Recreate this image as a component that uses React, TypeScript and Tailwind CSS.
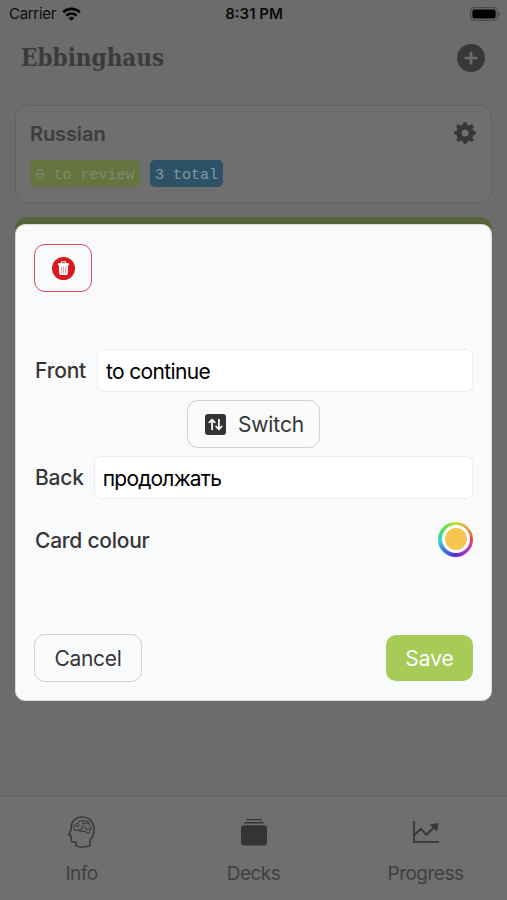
import React from 'react';

function WifiIcon() {
  return (
    <svg width="19" height="14" viewBox="0 0 19 14" fill="none" stroke="#050505" strokeWidth="2.6">
      <path d="M1.2 5.2C5.8 .7 13.2 .7 17.8 5.2" />
      <path d="M4.3 8.6C7.2 5.8 11.8 5.8 14.7 8.6" />
      <path d="M6.6 10.9C8.2 9.4 10.8 9.4 12.4 10.9L9.5 13.8Z" fill="#050505" stroke="none" />
    </svg>
  );
}

function BatteryIcon() {
  return (
    <svg width="31" height="14" viewBox="0 0 31 14">
      <rect x=".6" y=".6" width="26.8" height="12.8" rx="3.8" fill="none" stroke="#484848" strokeWidth="1.2" />
      <rect x="2.4" y="2.4" width="23.2" height="9.2" rx="2" fill="#020202" />
      <path d="M28.6 4.8C30.8 5.4 30.8 8.6 28.6 9.2Z" fill="#484848" />
    </svg>
  );
}

function PlusIcon() {
  return (
    <svg width="28" height="28" viewBox="0 0 28 28">
      <circle cx="14" cy="14" r="14" fill="#383838" />
      <path d="M14 8.8V19.2M8.8 14H19.2" stroke="#6c6c6c" strokeWidth="2.7" strokeLinecap="round" />
    </svg>
  );
}

function GearIcon() {
  return (
    <svg width="22" height="22" viewBox="0 0 22 22" fill="none" stroke="#373737">
      <circle cx="11" cy="11" r="6.1" strokeWidth="5.2" />
      <path
        d="M11 1.9V5M11 17V20.1M1.9 11H5M17 11H20.1M4.4 4.4L6.2 6.2M15.8 15.8L17.6 17.6M4.4 17.6L6.2 15.8M15.8 6.2L17.6 4.4"
        strokeWidth="3.9"
        strokeLinecap="round"
      />
    </svg>
  );
}

function TrashIcon() {
  return (
    <svg width="23" height="23" viewBox="0 0 23 23">
      <circle cx="11.5" cy="11.5" r="11.5" fill="#d9191c" />
      <path d="M9.3 6.2V5.7Q9.3 4.8 10.2 4.8H12.8Q13.7 4.8 13.7 5.7V6.2" fill="none" stroke="#fff" strokeWidth="1.1" />
      <path d="M5.9 6.1H17.1V8.1H5.9Z" fill="#fff" />
      <path d="M6.8 8.1H16.2L15.7 17Q15.6 18.1 14.5 18.1H8.5Q7.4 18.1 7.3 17Z" fill="#fff" />
      <path d="M9.3 9.5L9.6 16.4M11.5 9.5V16.4M13.7 9.5L13.4 16.4" stroke="#e46a6c" strokeWidth=".7" />
    </svg>
  );
}

function SwitchIcon() {
  return (
    <svg width="21" height="21" viewBox="0 0 21 21">
      <rect width="21" height="21" rx="3" fill="#323335" />
      <g fill="none" stroke="#fafbfc" strokeWidth="1.8" strokeLinecap="round" strokeLinejoin="round">
        <path d="M7.1 15.3V5.8M4.4 8.4L7.1 5.6L9.8 8.4" />
        <path d="M13.9 5.6V15M11.2 12.5L13.9 15.3L16.6 12.5" />
      </g>
    </svg>
  );
}

function HeadIcon() {
  return (
    <svg width="27" height="32" viewBox="0 0 27 32" fill="none" stroke="#3d3d3d" strokeLinecap="round" strokeLinejoin="round">
      <path
        strokeWidth="1.7"
        d="M8 29.6C11 31.5 17.5 31.4 22 29.8V23.8C24.6 21.2 26 17.5 26 13.4C26 6 21.2 1 14.3 1C7.7 1 3.2 5.1 3.2 11.2V13.6L1 18C.7 18.8 1.2 19.3 3 19.5V22.2L3.4 24.2C3.4 26 4.4 26.6 8 26V29.6"
      />
      <path
        strokeWidth="1.2"
        d="M6.2 13.4C5.5 10.4 7.2 7.9 9.5 7.2C10.6 4.8 14 4.1 15.8 5.2C18.8 4.2 21.4 6.4 21.4 8.9C23.4 10.8 23.2 13.3 22 14.8C22 16.4 20.8 17.2 19.8 17L16.6 15.2C13.5 15.6 11.4 14.9 9.8 14.1C8.3 14.8 6.9 14.4 6.2 13.4ZM8.4 10.4C10 10.5 11 9.5 11.1 8M12 13.5C14.3 13 15.7 11.2 14.7 9.3M14.6 6.4C16 8.2 18.4 8.1 19.4 6.7M17.2 11.2C17.4 13.4 19.8 14.1 21 12.5"
      />
    </svg>
  );
}

function DecksIcon() {
  return (
    <svg width="26" height="27" viewBox="0 0 26 27" fill="#343434">
      <path d="M5.8 0H20.2L21.2 1.3H4.8Z" />
      <path d="M4.2 3H21.8L23 4.5H3Z" />
      <path d="M3.2 6.2H22.8Q26 6.2 26 9V23.6Q26 26.4 23.1 26.4H2.9Q0 26.4 0 23.6V9Q0 6.2 3.2 6.2Z" />
    </svg>
  );
}

function ProgressIcon() {
  return (
    <svg width="26" height="22" viewBox="0 0 26 22" fill="none" stroke="#383838" strokeWidth="1.8">
      <path d="M1 0V20.9H26" />
      <path d="M1 14.2L7.8 7.9L13.5 13.8L21.8 5.5" strokeWidth="2" />
      <path d="M16.8 3.4L25.6 2L23.9 10.4Z" fill="#383838" stroke="none" />
    </svg>
  );
}

const tabs = [
  { label: 'Info', icon: <HeadIcon /> },
  { label: 'Decks', icon: <DecksIcon /> },
  { label: 'Progress', icon: <ProgressIcon /> },
];

export default function App() {
  return (
    <div className="relative flex h-[900px] w-full flex-col overflow-hidden bg-[#6c6c6c] font-['Inter',sans-serif] text-[#343434]">
      {/* Status bar */}
      <div className="grid h-7 shrink-0 grid-cols-3 items-center pr-[6px] pl-[9px] text-[15px] text-[#0b0b0b]">
        <div className="flex items-center gap-[6px]">
          <span className="tracking-[-0.3px]">Carrier</span>
          <WifiIcon />
        </div>
        <span className="pr-[2px] text-center font-semibold whitespace-nowrap">8:31 PM</span>
        <div className="flex justify-end">
          <BatteryIcon />
        </div>
      </div>

      {/* Header */}
      <header className="flex h-[60px] shrink-0 items-center justify-between pr-[22px] pl-[21px]">
        <h1 className="font-['DejaVu_Serif_Condensed','DejaVu_Serif',serif] text-[24px] font-bold text-[#3b3b3b]">
          Ebbinghaus
        </h1>
        <PlusIcon />
      </header>

      {/* Decks */}
      <main className="flex flex-1 flex-col gap-[14px] px-[15px] pt-[17px]">
        <section className="h-[98px] shrink-0 rounded-xl border border-[#626262] bg-[#6f6f6f] px-[14px] pt-[12px]">
          <div className="flex h-[30px] items-center justify-between pr-[1px]">
            <h2 className="pt-[1px] text-[20px] font-semibold tracking-[-0.1px] text-[#3d3d3d]">Russian</h2>
            <GearIcon />
          </div>
          <div className="mt-3 flex gap-[10px] font-['Liberation_Mono',monospace] text-[15px]">
            <span className="flex h-[27px] w-[110px] items-center justify-center rounded-[5px] bg-[#66743f] pt-[4px] leading-none whitespace-nowrap text-[#808971]">
              0 to review
            </span>
            <span className="flex h-[27px] w-[73px] items-center justify-center rounded-[5px] bg-[#2d5267] pt-[4px] leading-none whitespace-nowrap text-[#8799a3]">
              3 total
            </span>
          </div>
        </section>
        <section className="h-[60px] rounded-xl bg-[#56623a]" />
      </main>

      {/* Tab bar */}
      <nav className="flex h-[105px] shrink-0 justify-center border-t-2 border-[#646464] bg-[#6f6f6f]">
        {tabs.map((tab) => (
          <div key={tab.label} className="flex w-[172px] shrink-0 flex-col items-center pt-[17px]">
            <div className="flex h-9 items-center">{tab.icon}</div>
            <span className="mt-[10px] text-[19px] leading-[28px] tracking-[-0.5px] text-[#404040]">{tab.label}</span>
          </div>
        ))}
      </nav>

      {/* Edit card dialog */}
      <div className="absolute inset-x-[15px] top-[224px] flex h-[477px] flex-col rounded-[10px] border border-[#d7d8da] bg-[#f9fafc] px-[18px] pt-[19px] pb-[18px] text-[21px]">
        <button className="flex h-[48px] w-[58px] items-center justify-center rounded-[11px] border-[1.5px] border-[#e04e50]">
          <TrashIcon />
        </button>

        <label className="mt-[57px] flex h-[43px] items-center gap-[11px] pl-[1px] font-medium tracking-[-0.2px] text-[#363636]">
          <span className="pt-[1px]">Front</span>
          <span className="flex h-full flex-1 items-center rounded-[7px] border border-[#ededef] bg-white pt-[2px] pl-[8px] font-normal tracking-[-0.65px] text-black">
            to continue
          </span>
        </label>

        <button className="mt-[8px] flex h-[48px] w-[133px] shrink-0 items-center justify-center gap-[12px] self-center rounded-[11px] border border-[#cfd0d2] pl-[2px] tracking-[-0.1px] text-[#363636]">
          <SwitchIcon />
          <span className="pt-[1px]">Switch</span>
        </button>

        <label className="mt-[8px] flex h-[43px] items-center gap-[10px] pl-[1px] font-medium tracking-[-0.2px] text-[#363636]">
          <span className="pt-[1px]">Back</span>
          <span className="flex h-full flex-1 items-center rounded-[7px] border border-[#ededef] bg-white pt-[2px] pl-[8px] font-normal tracking-[-0.8px] text-black">
            продолжать
          </span>
        </label>

        <div className="mt-[22px] flex h-[36px] items-center justify-between pl-[1px] font-medium tracking-[-0.25px] text-[#363636]">
          <span className="pt-[3px]">Card colour</span>
          <div className="flex size-[35px] items-center justify-center rounded-full bg-[conic-gradient(#c9e03a,#ee9d3a_50deg,#e54b42_85deg,#c43cbb_125deg,#5c2dcc_180deg,#3b78e0_225deg,#35d0dc_265deg,#3edc7c_295deg,#84e03c_330deg,#c9e03a)]">
            <div className="size-[28px] rounded-full border-[3px] border-white bg-[#f5c652]" />
          </div>
        </div>

        <div className="mt-auto flex h-[48px] items-center justify-between">
          <button className="h-[48px] w-[108px] rounded-[11px] border border-[#cfd0d2] pt-[2px] tracking-[-0.35px] text-[#363636]">
            Cancel
          </button>
          <button className="h-[46px] w-[87px] rounded-[10px] bg-[#a7cb57] pt-[2px] text-white">Save</button>
        </div>
      </div>
    </div>
  );
}
